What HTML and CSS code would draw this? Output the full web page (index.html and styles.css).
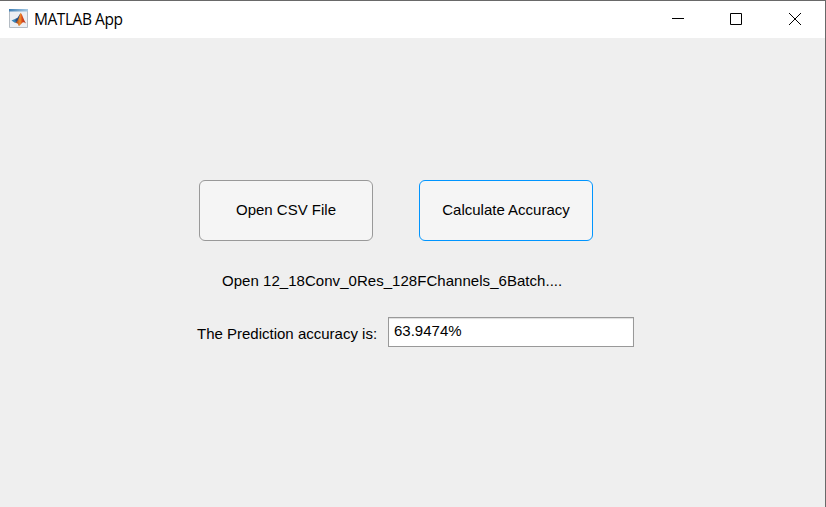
FILE: index.html
```html
<!DOCTYPE html>
<html lang="en">
<head>
<meta charset="utf-8">
<title>MATLAB App</title>
<link rel="stylesheet" href="styles.css">
</head>
<body>
<div class="window">
  <header class="titlebar">
    <svg class="app-icon" width="20" height="20" viewBox="0 0 20 20">
      <defs>
        <linearGradient id="bar" x1="0" x2="1"><stop offset="0" stop-color="#3f7fb5"/><stop offset="1" stop-color="#a9cbe4"/></linearGradient>
        <linearGradient id="flame" x1="0" x2="1"><stop offset="0" stop-color="#8a2a1c"/><stop offset=".45" stop-color="#f0922a"/><stop offset=".65" stop-color="#d9481c"/><stop offset="1" stop-color="#a52a12"/></linearGradient>
      </defs>
      <rect x=".5" y=".5" width="18" height="18" fill="#eceff3"/>
      <path d="M.5 2v16.500h18V2" fill="none" stroke="#b4bcc4"/>
      <rect width="19" height="2.500" fill="url(#bar)"/>
      <path d="M2.500 11.500 7 9.600 9.200 11.400 6.200 14Z" fill="#3b86b8"/>
      <path d="M7 9.600C9 9.200 9.800 6.200 11.400 4.200L10.500 10 8 13.200 6.200 12Z" fill="#294f83"/>
      <path d="M11.600 3.800C13.200 5 14.400 10.500 17 14.400 15 12.900 14 12.800 12.600 14.400 11.700 15.600 10.800 16.600 9.700 17 9.200 14.800 8.300 13.600 6.200 14 9.300 12.500 10.200 7 11.600 3.800Z" fill="url(#flame)"/>
    </svg>
    <h1 class="title">MATLAB App</h1>
    <div class="controls">
      <svg class="control" viewBox="0 0 58 37"><path d="M22 17.500h12"/></svg>
      <svg class="control" viewBox="0 0 58 37"><path d="M22.500 12.500h11v11h-11z"/></svg>
      <svg class="control close" viewBox="0 0 58 37"><path d="M23 12l12 12M35 12l-12 12"/></svg>
    </div>
  </header>
  <main class="panel">
    <div class="buttons">
      <button class="button">Open CSV File</button>
      <button class="button focused">Calculate Accuracy</button>
    </div>
    <p class="status">Open 12_18Conv_0Res_128FChannels_6Batch....</p>
    <div class="result">
      <label class="label" for="accuracy">The Prediction accuracy is:</label>
      <input class="field" id="accuracy" value="63.9474%">
    </div>
  </main>
</div>
</body>
</html>
```
FILE: styles.css
```css
* { box-sizing: border-box; }
body { margin: 0; background: #efefef; font: 15px/18px "Liberation Sans", Arial, sans-serif; color: #000; }
.window { width: 826px; height: 507px; border-top: 1px solid #696969; border-right: 1px solid #696969; overflow: hidden; }
.titlebar { display: flex; align-items: flex-start; height: 37px; padding-left: 9px; background: #fff; }
.app-icon { margin-top: 8px; }
.title { margin: 8px 0 0 5px; font: 400 15.5px/20px "Open Sans", sans-serif; letter-spacing: -0.45px; }
.controls { display: flex; margin-left: auto; padding-right: 1px; }
.control { width: 58px; height: 37px; fill: none; stroke: #000; stroke-width: 1; }
.panel { height: 469px; padding-top: 142px; background: #efefef; }
.buttons { display: flex; gap: 46px; margin-left: 199px; }
.button { width: 174px; height: 61px; padding: 0 0 2px; border: 1px solid #999; border-radius: 6px; background: #f5f5f5; color: #000; font: inherit; }
.focused { border-color: #0095ff; }
.status { margin: 31px 0 0 222px; letter-spacing: 0.04px; white-space: nowrap; }
.result { display: flex; align-items: flex-start; margin: 27px 0 0 197px; }
.label { width: 191px; padding-top: 8px; white-space: nowrap; }
.field { width: 246px; height: 30px; padding: 0 5px 3px; border: 1px solid #999; border-radius: 0; outline: 0; background: #fff; box-shadow: inset 0 1px 1px #ddd; color: #000; font: inherit; }
```
